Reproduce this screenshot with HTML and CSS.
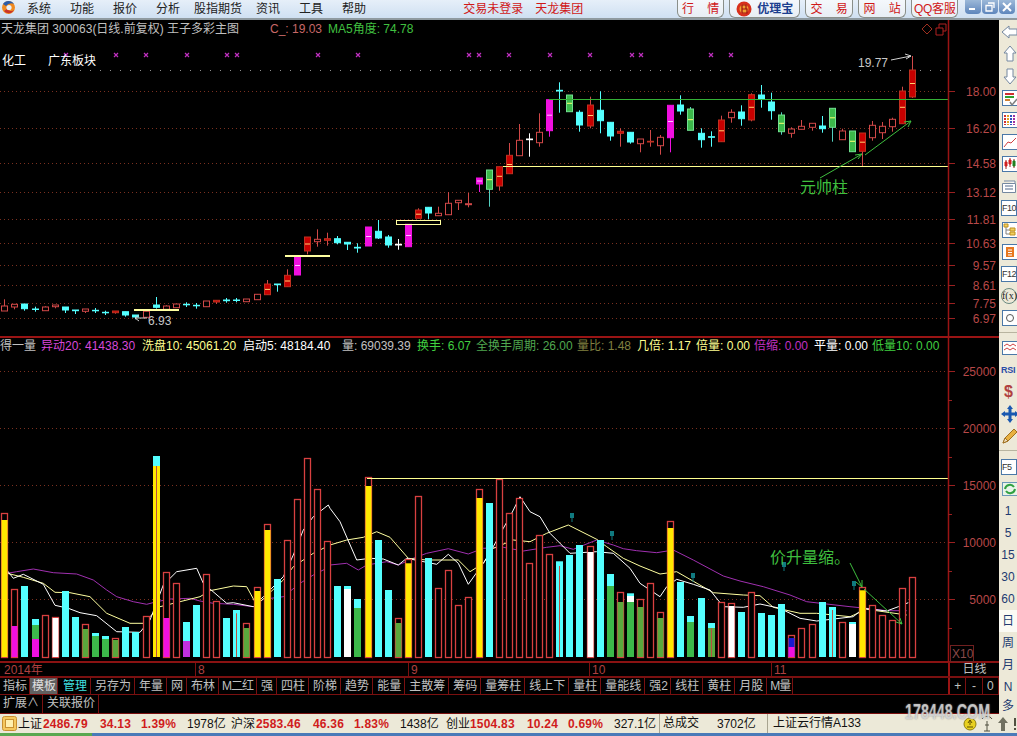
FILE: index.html
```html
<!DOCTYPE html>
<html lang="zh-CN">
<head>
    <meta charset="UTF-8">
    <title>天龙集团 300063</title>
    <link rel="stylesheet" href="styles.css">
</head>
<body>
    <!-- menu bar -->
    <header class="topbar">
        <svg class="logo" width="15" height="15" viewBox="0 0 15 15">
            <circle cx="7.5" cy="7.5" r="6.5" fill="#f08a20"/>
            <path d="M2 4 A6.5 6.5 0 0 1 13 4 A7 7 0 0 0 5 6 Z" fill="#2a5caa"/>
            <path d="M3 11 A6 6 0 0 0 13 10 A5 5 0 0 1 6 9 Z" fill="#c8342a"/>
            <circle cx="8" cy="7.5" r="2.6" fill="#e8f0f8"/>
        </svg>
        <nav class="menu">
            <span>系统</span><span>功能</span><span>报价</span><span>分析</span>
            <span class="menu-wide">股指期货</span><span>资讯</span><span>工具</span><span>帮助</span>
        </nav>
        <div class="trade-links">
            <span>交易未登录</span><span>天龙集团</span>
        </div>
        <div class="quick-btns">
            <span class="qbtn w46 spaced">行 情</span>
            <span class="qbtn w71 brand">
                <svg width="16" height="16" viewBox="0 0 16 16">
                    <circle cx="8" cy="8" r="7.5" fill="#d8301c"/>
                    <circle cx="8" cy="8" r="4.5" fill="#f0a030"/>
                    <path d="M6 4 V12 M6 4 H10 V8 H6 M6 8 H11 V12 H6" fill="none" stroke="#a01010" stroke-width="1.2"/>
                </svg>
                <b>优理宝</b>
            </span>
            <span class="qbtn w48 spaced">交 易</span>
            <span class="qbtn w48 spaced">网 站</span>
            <span class="qbtn w47">QQ客服</span>
        </div>
        <div class="win-btns">
            <span class="win-btn">
                <svg width="16" height="14" viewBox="0 0 16 14"><path d="M4 9 H10" stroke="#fff" stroke-width="2"/></svg>
            </span>
            <span class="win-btn">
                <svg width="16" height="14" viewBox="0 0 16 14"><path d="M6 3 H12 V8 M4 5.5 H10 V11 H4 Z" fill="none" stroke="#fff" stroke-width="1.3"/></svg>
            </span>
            <span class="win-btn">
                <svg width="16" height="14" viewBox="0 0 16 14"><path d="M4 3 L12 11 M12 3 L4 11" stroke="#fff" stroke-width="2"/></svg>
            </span>
        </div>
    </header>

    <div class="workspace">
        <main class="terminal">
            <!-- price chart -->
            <section class="panel panel-price">
                <svg class="chart" width="999" height="316" viewBox="0 20 999 316">
                    <g id="priceGrid"></g>
                    <g id="priceMarks"></g>
                    <g id="candles"></g>
                    <path d="M549 99.5 H948" stroke="#35b035"/>
                    <path d="M503 166.5 H948" stroke="#ffff90"/>
                    <path d="M134 310 H179 M285 256 H330" stroke="#ffffa0" stroke-width="2"/>
                    <rect x="396.5" y="220.5" width="44" height="4" fill="none" stroke="#ffffa0"/>
                    <path d="M820 178 L862 154 M855 155 L862 154 L858 159 M865 155 L911 121 M904 122 L911 121 L908 127" fill="none" stroke="#3fbf3f"/>
                    <path d="M891 60 L911 56 M905 54 L911 56 L906 59" fill="none" stroke="#d0d0d0"/>
                    <path d="M135 318 H147 M139 315 L135 318 L139 321" fill="none" stroke="#d0d0d0"/>
                    <text class="note" x="858" y="67">19.77</text>
                    <text class="note" x="148" y="325">6.93</text>
                    <text class="call" x="800" y="193">元帅柱</text>
                    <path d="M927 24 L932 29 L927 34 L922 29 Z" fill="none" stroke="#a03020"/>
                    <path d="M936 28 H943 V35 H936 Z M939 28 V24 H946 V31 H943" fill="none" stroke="#b02020"/>
                    <path d="M948.5 20 V336" stroke="#9a1414" stroke-width="1.5"/>
                    <g id="priceAxis" class="axis"></g>
                </svg>
                <div class="quote-row">
                    <span class="stock">天龙集团 300063(日线.前复权) 王子多彩主图</span>
                    <span class="price-c">C_: 19.03</span>
                    <span class="angle">MA5角度: 74.78</span>
                </div>
                <div class="sector-row">
                    <span class="sector-a">化工</span>
                    <span>广东板块</span>
                </div>
            </section>

            <!-- volume chart -->
            <section class="panel panel-volume">
                <svg class="chart" width="999" height="325" viewBox="0 337 999 325">
                    <g id="volumeGrid"></g>
                    <g id="volumeLines"></g>
                    <g id="bars"></g>
                    <g id="volumeMarks"></g>
                    <path d="M367 478.5 H948" stroke="#ffff90"/>
                    <path d="M850 563 L862 587 M856 582 L862 587 L862 580 M864 589 L902 624 M896 622 L902 624 L900 618" fill="none" stroke="#3fbf3f"/>
                    <text class="call" x="770" y="563">价升量缩。</text>
                    <path d="M948.5 337 V662" stroke="#9a1414" stroke-width="1.5"/>
                    <g id="volumeAxis" class="axis"></g>
                    <rect x="950.5" y="645.5" width="23" height="16" fill="#000" stroke="#702020"/>
                    <text class="x10" x="952" y="658">X10</text>
                </svg>
                <div class="indicator-row">
                    <span class="c-silver">得一量</span>
                    <span class="c-magenta">异动20: 41438.30</span>
                    <span class="c-yellow">洗盘10: 45061.20</span>
                    <span class="c-white">启动5: 48184.40</span>
                    <span class="c-silver">量: 69039.39</span>
                    <span class="c-green">换手: 6.07</span>
                    <span class="c-dimgreen">全换手周期: 26.00</span>
                    <span class="c-olive">量比: 1.48</span>
                    <span class="c-yellow">几倍: 1.17</span>
                    <span class="c-yellow">倍量: 0.00</span>
                    <span class="c-purple">倍缩: 0.00</span>
                    <span class="c-white">平量: 0.00</span>
                    <span class="c-green">低量10: 0.00</span>
                </div>
            </section>

            <!-- date axis -->
            <div class="date-row">
                <div class="dates">
                    <span class="date d-year">2014年</span>
                    <span class="date d-8">8</span>
                    <span class="date d-9">9</span>
                    <span class="date d-10">10</span>
                    <span class="date">11</span>
                </div>
                <div class="period">日线</div>
            </div>

            <!-- indicator tabs -->
            <div class="tab-row">
                <div class="tabs">
                    <span class="tab tab-first">指标</span>
                    <span class="tab tab-active">模板</span>
                    <span class="tab tab-cyan">管理</span>
                    <span class="tab">另存为</span>
                    <span class="tab">年量</span>
                    <span class="tab">网</span>
                    <span class="tab">布林</span>
                    <span class="tab tab-m w38">M二红</span>
                    <span class="tab">强</span>
                    <span class="tab">四柱</span>
                    <span class="tab">阶梯</span>
                    <span class="tab">趋势</span>
                    <span class="tab">能量</span>
                    <span class="tab">主散筹</span>
                    <span class="tab">筹码</span>
                    <span class="tab">量筹柱</span>
                    <span class="tab">线上下</span>
                    <span class="tab">量柱</span>
                    <span class="tab">量能线</span>
                    <span class="tab w26">强2</span>
                    <span class="tab">线柱</span>
                    <span class="tab">黄柱</span>
                    <span class="tab">月股</span>
                    <span class="tab tab-m w26">M量</span>
                </div>
                <div class="zoom-btns">
                    <span>+</span><span>-</span><span>0</span>
                </div>
            </div>
            <div class="tab-row tab-row-second">
                <div class="tabs">
                    <span class="tab w43">扩展∧</span>
                    <span class="tab">关联报价</span>
                </div>
            </div>
        </main>

        <!-- right toolbar -->
        <aside class="toolbar">
            <div class="tool"><svg width="18" height="18" viewBox="0 0 18 18"><path d="M1 9 L8 3 V6 H16 V12 H8 V15 Z" fill="#fff" stroke="#7488a0"/></svg></div>
            <div class="tool"><svg width="18" height="18" viewBox="0 0 18 18"><path d="M9 1 L15 8 H12 V16 H6 V8 H3 Z" fill="#fff" stroke="#7488a0"/></svg></div>
            <div class="tool"><svg width="18" height="18" viewBox="0 0 18 18"><path d="M9 17 L15 10 H12 V2 H6 V10 H3 Z" fill="#fff" stroke="#7488a0"/></svg></div>
            <div class="tool"><svg width="18" height="18" viewBox="0 0 18 18"><rect x="1.5" y="1.5" width="15" height="15" fill="#fff" stroke="#4a78a8"/><path d="M4 5 H13" stroke="#d03030" stroke-width="2"/><path d="M4 8 H13" stroke="#30a030" stroke-width="2"/><path d="M4 11 H9" stroke="#d08030" stroke-width="2"/><path d="M9 13 L11 16 L16 10" fill="none" stroke="#808080" stroke-width="1.5"/></svg></div>
            <div class="tool"><svg width="18" height="18" viewBox="0 0 18 18"><rect x="1.5" y="1.5" width="15" height="15" fill="#fff" stroke="#4a78a8"/><path d="M4 4 V14" stroke="#d03030" stroke-width="2" stroke-dasharray="2 1"/><path d="M7 4 V14" stroke="#e0a020" stroke-width="2" stroke-dasharray="2 1"/><path d="M10 4 V14" stroke="#3050c0" stroke-width="2" stroke-dasharray="2 1"/><path d="M13 4 V14" stroke="#a030a0" stroke-width="2" stroke-dasharray="2 1"/></svg></div>
            <div class="tool"><svg width="18" height="18" viewBox="0 0 18 18"><rect x="1.5" y="1.5" width="15" height="15" fill="#fff" stroke="#4a78a8"/><path d="M3 14 L7 9 L10 10 L15 5" fill="none" stroke="#d04040"/></svg></div>
            <div class="tool"><svg width="18" height="18" viewBox="0 0 18 18"><rect x="1.5" y="1.5" width="15" height="15" fill="#fff" stroke="#4a78a8"/><path d="M5 5 V14 M9 3 V12 M13 4 V13" stroke="#a02020"/><path d="M4 7 H6 V11 H4 Z M8 5 H10 V9 H8 Z" fill="#d02020" stroke="#d02020"/><path d="M12 6 H14 V11 H12 Z" fill="#208020" stroke="#208020"/></svg></div>
            <div class="tool"><svg width="18" height="18" viewBox="0 0 18 18"><path d="M3 4 H14 V6 M1.5 6.5 H14.5 V15.5 H1.5 Z" fill="#fff" stroke="#7488a0"/><path d="M4 9 H12 M4 12 H12" stroke="#50688a"/></svg></div>
            <div class="tool"><span class="fkey">F10</span></div>
            <div class="tool"><svg width="18" height="18" viewBox="0 0 18 18"><rect x="1.5" y="1.5" width="15" height="15" fill="#fff" stroke="#4a78a8"/><path d="M5 5 V13 H9 M5 9 H9" fill="none" stroke="#808080"/><path d="M3 3 H7 V6 H3 Z M9 7 H14 V10 H9 Z M9 11 H14 V14 H9 Z" fill="#f0d060" stroke="#c09020"/></svg></div>
            <div class="tool"><svg width="18" height="18" viewBox="0 0 18 18"><rect x="1.5" y="1.5" width="15" height="15" fill="#fff" stroke="#4a78a8"/><path d="M5 4 H13 V14 H5 Z" fill="#e87820"/><path d="M7 7 H11 M7 9.5 H11 M7 12 H11" stroke="#fff"/></svg></div>
            <div class="tool"><span class="fkey">F12</span></div>
            <div class="tool"><span class="fx">f(x)</span></div>
            <div class="tool"><svg width="18" height="18" viewBox="0 0 18 18"><rect x="1.5" y="1.5" width="15" height="15" fill="#fff" stroke="#4a78a8"/><circle cx="9" cy="9" r="3.5" fill="none" stroke="#555"/></svg></div>
            <div class="tool-sep tool-sep-a"></div>
            <div class="tool"><svg width="18" height="18" viewBox="0 0 18 18"><rect x="1.5" y="2.5" width="15" height="13" fill="#fff" stroke="#4a78a8"/><path d="M3 7 L6 5 L9 7 L12 5 L15 7 M3 11 L6 9 L9 11 L12 9 L15 11" fill="none" stroke="#d04040"/></svg></div>
            <div class="tool"><b class="rsi">RSI</b></div>
            <div class="tool"><b class="dollar">$</b></div>
            <div class="tool"><svg width="18" height="18" viewBox="0 0 18 18"><path d="M9 0 L12 4 H10.5 V7.5 H14 V6 L18 9 L14 12 V10.5 H10.5 V14 H12 L9 18 L6 14 H7.5 V10.5 H4 V12 L0 9 L4 6 V7.5 H7.5 V4 H6 Z" fill="#1a58b0"/></svg></div>
            <div class="tool"><svg width="18" height="18" viewBox="0 0 18 18"><path d="M2 16 L4 11 L13 2 L16 5 L7 14 Z" fill="#e8b040" stroke="#a07020"/><path d="M2 16 L4 11 L7 14 Z" fill="#f0e0c0" stroke="#a07020"/></svg></div>
            <div class="tool-sep tool-sep-b"></div>
            <div class="tool"><span class="fkey">F5</span></div>
            <div class="tool"><svg width="18" height="18" viewBox="0 0 18 18"><rect x="1.5" y="2.5" width="15" height="13" fill="#e8f4e8" stroke="#6a98b8"/><path d="M4 9 A5 5 0 0 1 13 7 M14 9 A5 5 0 0 1 5 11" fill="none" stroke="#30a040" stroke-width="2"/></svg></div>
            <div class="tool tool-text">1</div>
            <div class="tool tool-text">5</div>
            <div class="tool tool-text">15</div>
            <div class="tool tool-text">30</div>
            <div class="tool tool-text">60</div>
            <div class="tool tool-text tool-on">日</div>
            <div class="tool tool-text">周</div>
            <div class="tool tool-text">月</div>
            <div class="tool tool-text">N</div>
            <div class="tool tool-text tool-last">多</div>
        </aside>
    </div>

    <!-- status bar -->
    <footer class="statusbar">
        <svg class="status-icon" width="15" height="15" viewBox="0 0 15 15">
            <rect x="0.5" y="0.5" width="14" height="14" rx="2" fill="#f4c860" stroke="#c89030"/>
            <rect x="3.5" y="3.5" width="8" height="8" fill="#fff0b0" stroke="#c89030"/>
        </svg>
        <span class="s-name s-first">上证</span><b class="s-val w46px">2486.79</b><b class="s-val w41px">34.13</b><b class="s-val w47px">1.39%</b><span class="s-amt w44px">1978亿</span>
        <span class="s-name">沪深</span><b class="s-val w46px">2583.46</b><b class="s-val w41px">46.36</b><b class="s-val w47px">1.83%</b><span class="s-amt w46px">1438亿</span>
        <span class="s-name">创业</span><b class="s-val w58px">1504.83</b><b class="s-val w41px">10.24</b><b class="s-val w47px">0.69%</b><span class="s-amt w45px">327.1亿</span>
        <span class="s-cell s-total">总成交</span><span class="s-amt s-amount">3702亿</span>
        <span class="s-cell s-cloud">上证云行情A133</span>
        <div class="tray">
            <svg width="14" height="14" viewBox="0 0 14 14"><circle cx="7" cy="7" r="6" fill="#e8d020" stroke="#908010"/><path d="M7 3 V8 M5 6 L7 3 L9 6 M4 10 H10" fill="none" stroke="#605000"/></svg>
            <svg width="12" height="16" viewBox="0 0 12 16"><path d="M6 5 V15 M3 15 H9 M4 9 H8 M1 3 A6 6 0 0 1 11 3" fill="none" stroke="#505040"/></svg>
            <svg width="12" height="16" viewBox="0 0 12 16"><path d="M6 1 L11 7 H8 V15 H4 V7 H1 Z" fill="#707060"/></svg>
            <svg width="4" height="16" viewBox="0 0 4 16"><path d="M2 2 V10 M2 12 V14" stroke="#505040" stroke-width="2"/></svg>
        </div>
    </footer>
    <div class="taskbar"><div class="start"></div></div>

    <!-- site watermark -->
    <div class="watermark">178448.COM</div>

    <script src="chart.js"></script>
</body>
</html>
```

FILE: styles.css
```css
* {
    box-sizing: border-box;
}

html, body {
    margin: 0;
    height: 100%;
}

body {
    position: relative;
    width: 1017px;
    height: 736px;
    overflow: hidden;
    font-family: "Liberation Sans", "Noto Sans CJK SC", sans-serif;
    font-size: 12px;
    line-height: 16px;
    background-color: #000;
    color: #c0c0c0;
}

/* menu bar */
.topbar {
    display: flex;
    align-items: flex-start;
    height: 20px;
    border-bottom: 2px solid #8f9aa0;
    background: linear-gradient(#e6eff9, #cfe0f2);
    color: #222;
    white-space: nowrap;
}

.topbar > * {
    flex: none;
}

.logo {
    margin: 0 0 0 1px;
}

.menu {
    display: flex;
    gap: 19px;
    margin-left: 11px;
    padding-top: 1px;
}

.menu span {
    flex: none;
}

.menu-wide {
    margin: 0 -5px;
}

.trade-links {
    display: flex;
    gap: 12px;
    margin-left: 97px;
    padding-top: 1px;
    color: #d01818;
}

.quick-btns {
    display: flex;
    gap: 5px;
    margin-left: 94px;
}

.qbtn {
    display: flex;
    flex: none;
    align-items: center;
    justify-content: center;
    height: 18px;
    border: 1px solid #8a8f8a;
    border-top: none;
    border-radius: 0 0 6px 6px;
    background: linear-gradient(#f4f8fc, #e8eef4);
    color: #d01818;
}

.spaced {
    word-spacing: 10px;
}

.brand {
    gap: 5px;
    color: #1c3f8f;
}

.brand b {
    font-size: 12px;
}

.w46 { width: 47px; }
.w47 { width: 47px; letter-spacing: -0.3px; }
.w48 { width: 48px; }
.w71 { width: 71px; }

.win-btns {
    display: flex;
    gap: 1px;
    margin-left: 7px;
}

.win-btn {
    display: block;
    width: 16px;
    height: 14px;
    border-radius: 0 0 4px 4px;
    background: linear-gradient(#9cb8d8, #5e86bc);
}

.win-btn svg {
    display: block;
}

/* main area */
.workspace {
    display: flex;
    height: 694px;
}

.terminal {
    width: 999px;
    flex: none;
    background-color: #000;
}

.panel {
    position: relative;
}

.panel-price {
    height: 316px;
    border-bottom: 0;
}

.panel-volume {
    height: 327px;
    border-top: 2px solid #9a1414;
    border-bottom: 2px solid #8a1212;
}

.chart {
    position: absolute;
    left: 0;
    top: 0;
    display: block;
}

.panel-volume .chart {
    top: -1px;
}

.axis text {
    fill: #b84848;
    font-size: 12px;
    text-anchor: end;
}

.note {
    fill: #c8c8c8;
    font-size: 12px;
}

.call {
    fill: #3fbf3f;
    font-size: 16px;
}

.x10 {
    fill: #8a4a4a;
    font-size: 12px;
}

.quote-row {
    position: relative;
    display: flex;
    height: 18px;
    padding: 1px 0 0 1px;
}

.stock {
    width: 269px;
    flex: none;
}

.price-c {
    width: 58px;
    flex: none;
    color: #c86868;
}

.angle {
    color: #40c040;
}

.sector-row {
    position: relative;
    display: flex;
    margin-top: 15px;
    padding-left: 2px;
    color: #fff;
}

.sector-a {
    width: 46px;
}

.indicator-row {
    position: relative;
    display: grid;
    grid-template-columns: 41px 101px 101px 99px 75px 59px 101px 60px 59px 58px 60px 58px 76px;
    height: 16px;
    white-space: nowrap;
}

.c-silver { color: #c0c0c0; }
.c-magenta { color: #d848d8; }
.c-yellow { color: #ffff90; }
.c-white { color: #fff; }
.c-green { color: #40d040; }
.c-dimgreen { color: #50a850; }
.c-olive { color: #808040; }
.c-purple { color: #c030c0; }

/* date axis */
.date-row {
    display: flex;
    height: 15px;
    border-bottom: 2px solid #7a1010;
}

.dates {
    display: flex;
    width: 948px;
    color: #b04040;
    line-height: 15px;
}

.date {
    height: 13px;
    padding-left: 2px;
    border-left: 1px solid #7a1010;
}

.d-year {
    width: 195px;
    padding-left: 4px;
    border-left: none;
}

.d-8 { width: 213px; }
.d-9 { width: 181px; }
.d-10 { width: 182px; }

.period {
    flex: 1;
    border-left: 2px solid #9a1414;
    text-align: center;
    line-height: 13px;
}

/* tabs */
.tab-row {
    display: flex;
    height: 17px;
    border-bottom: 1px solid #7a1010;
    line-height: 16px;
}

.tab-row-second {
    height: 19px;
}

.tabs {
    display: flex;
    width: 948px;
}

.tab {
    flex: none;
    padding: 0 3px 0 4px;
    border-right: 1px solid #7a1010;
    white-space: nowrap;
}

.tab-first {
    width: 30px;
    padding: 0 0 0 3px;
}

.tab-active {
    width: 28px;
    padding: 0 0 0 2px;
    background-color: #606060;
    color: #e0e0e0;
}

.tab-cyan {
    width: 33px;
    padding: 0 0 0 5px;
    color: #40e0e0;
}

.tab-m {
    padding: 0 0 0 3px;
    letter-spacing: -1px;
}

.w26 { width: 26px; }
.w38 { width: 38px; }
.w43 { width: 43px; padding: 0 0 0 3px; }

.zoom-btns {
    display: flex;
    flex: 1;
    border-left: 2px solid #9a1414;
}

.zoom-btns span {
    flex: 1;
    text-align: center;
    border-right: 1px solid #7a1010;
}

/* right toolbar */
.toolbar {
    flex: 1;
    overflow: hidden;
    padding: 1px 0 0 2px;
    background-color: #ede9d8;
    color: #223a70;
}

.tool {
    display: flex;
    align-items: center;
    height: 22px;
    white-space: nowrap;
}

.tool svg {
    flex: none;
}

.tool-sep {
    border-top: 1px solid #b8b4a0;
}

.tool-sep-a { height: 8px; margin: 3px 0 -3px -2px; }
.tool-sep-b { height: 9px; margin: 3px 0 -3px -2px; }

.fkey {
    display: block;
    width: 16px;
    height: 16px;
    border: 1px solid #4a78a8;
    background-color: #fff;
    color: #333;
    font-size: 9px;
    line-height: 14px;
    letter-spacing: -0.5px;
}

.fx {
    display: block;
    width: 16px;
    height: 16px;
    border: 1px solid #6a8a80;
    border-radius: 8px;
    color: #222;
    font-family: "Liberation Serif", serif;
    font-size: 10px;
    line-height: 14px;
    text-align: center;
}

.rsi {
    color: #2a4ca8;
    font-size: 9px;
    letter-spacing: -0.3px;
}

.dollar {
    color: #b04040;
    font-size: 16px;
    padding-left: 3px;
}

.tool-text {
    margin-left: -2px;
    justify-content: center;
    color: #223a70;
}

.tool-on {
    background-color: #fbfaf4;
}

.tool-last {
    height: 16px;
}

/* status bar */
.statusbar {
    display: flex;
    align-items: center;
    height: 19px;
    background-color: #ece9d8;
    color: #111;
    white-space: nowrap;
}

.status-icon {
    flex: none;
    margin-left: 2px;
}

.s-name {
    width: 24px;
    flex: none;
}

.s-first {
    margin-left: 1px;
}

.s-val {
    flex: none;
    color: #d01c1c;
    font-size: 12px;
    letter-spacing: 0.2px;
}

.s-amt {
    flex: none;
    margin-left: 1px;
}

.w41px { width: 41px; margin-left: 11px; }
.w46px { width: 46px; margin-left: 1px; }
.w58px { width: 46px; margin-left: 0; }
.w47px { width: 35px; margin-left: 0; }
.w44px { width: 44px; margin-left: 11px; }
.w45px { width: 45px; margin-left: 11px; }

.s-amt.w46px { width: 46px; margin-left: 11px; }

.s-cell {
    flex: none;
    padding-left: 3px;
    border-left: 1px solid #a8a490;
    line-height: 19px;
}

.s-total {
    width: 57px;
}

.s-amount {
    width: 50px;
}

.s-cloud {
    padding-left: 5px;
}

.tray {
    display: flex;
    align-items: center;
    gap: 4px;
    margin-left: auto;
    padding-left: 4px;
    color: #555;
}

.taskbar {
    height: 3px;
    background-color: #4a7ab8;
}

.start {
    width: 92px;
    height: 3px;
    background-color: #5aa850;
}

.watermark {
    position: absolute;
    left: 905px;
    top: 701px;
    color: rgba(232, 232, 232, 0.72);
    font-size: 22px;
    font-weight: bold;
    line-height: 22px;
    text-shadow: 0 0 2px #888;
    white-space: nowrap;
    transform: scaleX(0.65);
    transform-origin: left top;
}
```

FILE: chart.js
```js
// column spacing of the kline chart
function columnX(i) {
    return 4.3 + 10.09 * i;
}

// numbers below are read off a 3x picture, so divide by 3 and add the offset
function y3(base, v) {
    return (base + v / 3).toFixed(1);
}

function line(x1, y1, x2, y2, color) {
    return '<path d="M' + x1 + ' ' + y1 + ' L' + x2 + ' ' + y2 + '" stroke="' + color + '"/>';
}

/* ---------- grid and axis ---------- */

var priceTicks = [[91, "18.00"], [128, "16.20"], [163, "14.58"], [192, "13.12"], [219, "11.81"],
    [243, "10.63"], [265, "9.57"], [285, "8.61"], [303, "7.75"], [318, "6.97"]];
var volumeTicks = [[371, "25000"], [428, "20000"], [485, "15000"], [542, "10000"], [599, "5000"]];

function drawAxis(ticks, gridId, axisId, mids) {
    var grid = "";
    var axis = "";
    ticks.forEach(function (t) {
        grid += '<path d="M0 ' + (t[0] + 0.5) + ' H948" stroke="#7a3020" stroke-dasharray="1 3"/>';
        axis += line(948, t[0] + 0.5, 955, t[0] + 0.5, "#9a2020");
        axis += '<text x="996" y="' + (t[0] + 5) + '">' + t[1] + "</text>";
    });
    mids.forEach(function (y) {
        axis += line(948, y + 0.5, 952, y + 0.5, "#9a2020");
    });
    document.getElementById(gridId).innerHTML = grid;
    document.getElementById(axisId).innerHTML = axis;
}

drawAxis(priceTicks, "priceGrid", "priceAxis", []);
drawAxis(volumeTicks, "volumeGrid", "volumeAxis", [400, 457, 514, 571, 628]);
document.getElementById("priceGrid").innerHTML +=
    '<path d="M0 70.5 H948" stroke="#909090" stroke-dasharray="1 9"/>';

/* ---------- purple crosses above the candles ---------- */

var crosses = [66, 116, 146, 187, 227, 237, 318, 358, 469, 479, 509, 550, 590, 632, 641, 711, 731];
var marks = "";
crosses.forEach(function (x) {
    marks += '<path d="M' + (x - 2) + ' 53 L' + (x + 2) + " 57 M" + (x + 2) + " 53 L" + (x - 2) +
        ' 57" stroke="#c030c0" stroke-width="1.2"/>';
});
document.getElementById("priceMarks").innerHTML = marks;

/* ---------- candles: high, body top, body bottom, low, kind ---------- */

var candlesEarly = [
    [328, 348, 363, 363, "h"], [343, 343, 351, 358, "h"], [342, 342, 356, 362, "c"], [350, 357, 358, 365, "c"],
    [349, 351, 362, 362, "h"], [345, 345, 350, 355, "h"], [351, 351, 360, 369, "c"], [360, 360, 362, 372, "c"],
    [357, 357, 364, 369, "h"], [354, 361, 362, 369, "c"], [362, 367, 368, 375, "c"], [363, 363, 368, 371, "r"],
    [365, 365, 375, 380, "c"], [375, 375, 381, 388, "c"], [364, 364, 382, 382, "h"], [321, 345, 352, 356, "c"],
    [346, 348, 358, 358, "h"], [342, 342, 353, 353, "h"], [337, 343, 344, 351, "c"], [339, 346, 347, 356, "c"],
    [333, 333, 350, 350, "h"], [331, 331, 336, 342, "r"], [324, 330, 332, 338, "c"], [324, 330, 331, 337, "c"],
    [327, 327, 335, 335, "h"], [313, 313, 329, 329, "h"], [270, 282, 314, 314, "r"], [282, 282, 284, 305, "c"],
    [238, 256, 290, 290, "r"], [198, 198, 255, 255, "m"], [141, 141, 183, 193, "r"], [118, 148, 155, 170, "h"],
    [128, 146, 151, 167, "r"], [138, 146, 158, 163, "c"], [157, 157, 162, 180, "c"], [160, 172, 174, 188, "c"],
    [111, 111, 168, 168, "m"], [90, 124, 144, 147, "c"], [135, 141, 165, 173, "c"], [147, 163, 165, 179, "w"],
    [103, 103, 170, 170, "m"], [55, 60, 85, 85, "r"], [52, 52, 69, 87, "c"], [50, 70, 77, 77, "h"],
    [6, 40, 74, 74, "h"], [31, 31, 38, 60, "h"], [9, 41, 44, 52, "h"]
];
var candlesLate = [
    [384, 384, 402, 426, "m"], [360, 360, 418, 470, "g"], [350, 350, 408, 422, "r"], [279, 316, 371, 371, "r"],
    [222, 271, 317, 317, "h"], [250, 267, 269, 320, "w"], [190, 247, 278, 290, "h"], [149, 149, 242, 260, "m"],
    [97, 121, 123, 188, "c"], [135, 135, 185, 185, "g"], [181, 187, 225, 245, "c"], [140, 165, 228, 235, "r"],
    [124, 181, 212, 250, "c"], [217, 217, 258, 272, "c"], [235, 244, 250, 290, "r"], [247, 247, 276, 281, "c"],
    [267, 267, 281, 307, "h"], [240, 274, 276, 290, "r"], [255, 262, 287, 314, "h"], [166, 166, 263, 307, "m"],
    [136, 165, 183, 194, "c"], [171, 177, 241, 241, "g"], [235, 250, 269, 293, "c"], [244, 260, 262, 290, "c"],
    [197, 210, 275, 275, "r"], [178, 187, 203, 218, "h"], [166, 186, 206, 227, "c"], [130, 134, 210, 214, "r"],
    [105, 135, 148, 173, "c"], [128, 156, 182, 209, "c"], [187, 195, 245, 254, "g"], [232, 237, 250, 263, "h"],
    [210, 229, 238, 238, "h"], [220, 220, 232, 242, "h"], [198, 228, 236, 248, "c"], [175, 175, 232, 275, "g"],
    [236, 243, 269, 269, "h"], [243, 243, 305, 305, "g"], [249, 249, 304, 348, "r"], [213, 226, 263, 272, "h"],
    [216, 229, 248, 267, "h"], [203, 208, 230, 245, "h"], [110, 123, 221, 221, "r"], [18, 60, 141, 144, "r"]
];

var candleColors = {
    h: { wick: "#d04848", fill: "#000", stroke: "#d04848" },
    r: { wick: "#d04848", fill: "#c80000", stroke: "#c03020", tick: "#ffd070" },
    c: { wick: "#54ffff", fill: "#54ffff", stroke: "#54ffff" },
    g: { wick: "#54d0c0", fill: "#3cb84a", stroke: "#70e090", tick: "#ffff70" },
    m: { wick: "#f010e0", fill: "#f010e0", stroke: "#f010e0", tick: "#ffc0ff" },
    w: { wick: "#fff", fill: "#fff", stroke: "#fff" }
};

function candleSvg(c, i, base) {
    var k = candleColors[c[4]];
    var cx = Math.round(columnX(i)) + 0.5;
    var top = y3(base, c[1]);
    var bottom = y3(base, c[2]);
    var s = line(cx, y3(base, c[0]), cx, y3(base, c[3]), k.wick);
    s += '<rect x="' + (cx - 3) + '" y="' + top + '" width="6" height="' + Math.max(bottom - top, 0.5).toFixed(1) +
        '" fill="' + k.fill + '" stroke="' + k.stroke + '"/>';
    if (k.tick && c[2] - c[1] > 14) {
        var mid = ((+top + +bottom) / 2).toFixed(1);
        s += line(cx - 2.5, mid, cx + 2.5, mid, k.tick);
    }
    return s;
}

var candleHtml = "";
candlesEarly.forEach(function (c, i) {
    candleHtml += candleSvg(c, i, 190);
});
candlesLate.forEach(function (c, i) {
    candleHtml += candleSvg(c, i + candlesEarly.length, 50);
});
document.getElementById("candles").innerHTML = candleHtml;

/* ---------- volume curves, behind the bars ---------- */

function curve(color, parts) {
    var pts = [];
    parts.forEach(function (p) {
        p[1].forEach(function (q) {
            pts.push((p[0] + q[0] / 3).toFixed(1) + "," + y3(450, q[1]));
        });
    });
    return '<polyline points="' + pts.join(" ") + '" fill="none" stroke="' + color + '"/>';
}

document.getElementById("volumeLines").innerHTML =
    curve("#a030b0", [
        [0, [[22, 370], [50, 365], [100, 357], [160, 368], [230, 372], [280, 390], [320, 420], [350, 440], [400, 455],
            [440, 463], [470, 455], [510, 447], [570, 445], [600, 453], [640, 460], [700, 463], [760, 470], [790, 448],
            [850, 440], [900, 400], [940, 375], [980, 355]]],
        [330, [[0, 345], [50, 340], [85, 360], [110, 345], [170, 335], [205, 345], [250, 325], [290, 310], [355, 296],
            [415, 312], [460, 295], [520, 292], [580, 303], [650, 292], [690, 287], [730, 298], [800, 270], [850, 285],
            [880, 296], [920, 302]]],
        [640, [[0, 303], [50, 308], [100, 300], [160, 330], [250, 378], [300, 393], [370, 410], [450, 435], [500, 455],
            [560, 462], [630, 470], [680, 475], [740, 482], [800, 482]]]
    ]) +
    curve("#ffffa0", [
        [0, [[22, 370], [70, 382], [130, 400], [165, 427], [210, 428], [270, 440], [320, 490], [390, 520], [430, 520],
            [480, 470], [540, 455], [600, 440], [630, 422], [700, 408], [740, 410], [770, 465], [850, 390], [880, 350],
            [940, 310]]],
        [330, [[0, 285], [50, 270], [100, 262], [140, 245], [180, 262], [235, 325], [290, 330], [385, 330], [420, 365],
            [460, 340], [490, 295], [550, 270], [600, 275], [650, 250], [715, 225], [800, 268], [830, 290], [880, 325]]],
        [640, [[0, 348], [60, 372], [110, 365], [220, 428], [310, 435], [360, 437], [400, 472], [480, 490], [530, 490],
            [630, 500], [680, 478], [800, 495]]]
    ]) +
    curve("#ffffff", [
        [0, [[22, 362], [40, 385], [70, 373], [130, 403], [165, 466], [205, 475], [240, 488], [290, 497], [350, 545],
            [420, 547], [450, 510], [490, 405], [530, 365], [590, 355], [610, 400], [680, 460], [700, 458], [760, 470],
            [790, 440], [850, 380], [880, 315], [910, 240], [940, 200], [985, 165]]],
        [330, [[0, 175], [30, 215], [80, 330], [120, 325], [160, 327], [205, 345], [230, 325], [320, 343], [355, 313],
            [385, 340], [415, 403], [460, 340], [490, 290], [520, 235], [545, 190], [570, 140], [600, 185], [630, 200],
            [660, 250], [720, 310], [800, 305], [850, 310], [900, 355]]],
        [640, [[0, 400], [60, 440], [80, 410], [110, 388], [160, 403], [210, 420], [250, 470], [310, 472], [360, 462],
            [420, 475], [480, 505], [530, 513], [640, 500], [670, 475], [740, 483], [775, 470], [805, 458]]]
    ]);

/* ---------- volume bars: pairs of top, kind, drawn from the tallest down ---------- */

var bars = [
    [190, "h", 210, "y"], [418, "h", 528, "m"], [408, "c"], [507, "c", 525, "g", 567, "m"], [496, "h"], [500, "h", 504, "w"],
    [423, "c"], [501, "c"], [523, "h", 537, "o"], [549, "c", 558, "g"], [558, "c", 567, "g"], [565, "h", 570, "o"],
    [531, "c"], [546, "c"], [499, "h"], [18, "c", 48, "y", 48, "l"], [367, "h", 504, "m"], [400, "h"],
    [516, "c", 573, "p"], [465, "c"], [373, "h"], [454, "h"], [504, "c"], [480, "c", 490, "l"],
    [519, "h", 534, "o"], [412, "h", 423, "y"], [223, "h", 240, "y"], [387, "c"], [271, "h"], [148, "h"],
    [25, "h"], [118, "h"], [274, "h"], [408, "c"], [408, "c", 417, "w"], [447, "c", 474, "g"],
    [82, "h", 108, "y"], [270, "c"], [420, "c"], [505, "h", 519, "o"], [328, "h", 340, "y"], [139, "h"],
    [324, "c"], [415, "h"], [361, "h"], [465, "h"], [441, "h"], [118, "h", 144, "y"],
    [159, "c"], [87, "h"], [190, "h"], [145, "h"], [340, "h"], [256, "h"], [313, "h"], [334, "c", 348, "l"],
    [315, "c"], [285, "c"], [289, "h", 306, "w"], [270, "c"], [372, "c", 408, "g"], [427, "h", 456, "o"],
    [430, "c", 438, "w", 456, "g"], [448, "h", 471, "o"], [400, "h"], [487, "h", 504, "o"], [214, "h", 234, "y"],
    [396, "c"], [498, "c", 516, "g"], [444, "c"], [519, "c", 534, "o", 534, "l"], [457, "h"], [460, "h", 468, "w"],
    [486, "c"], [427, "h"], [489, "c"], [495, "c"], [462, "c"], [556, "h", 564, "b", 591, "m"], [535, "h"],
    [523, "h"], [456, "c"], [471, "c", 480, "l"], [517, "h"], [516, "c", 522, "w"], [411, "h", 421, "y"],
    [465, "h"], [495, "h"], [511, "h"], [415, "h"], [381, "h"]
];

var barColors = { y: "#ffe800", c: "#54ffff", m: "#f010e0", w: "#fff", g: "#3cb84a", o: "#5aa83c", p: "#c030e0", b: "#1818d0" };

var barHtml = "";
bars.forEach(function (b, i) {
    var left = Math.round(columnX(i)) - 3;
    for (var n = 0; n < b.length; n += 2) {
        var top = +y3(450, b[n]);
        var kind = b[n + 1];
        if (kind === "h") {
            barHtml += '<rect x="' + (left + 0.5) + '" y="' + (Math.round(top) + 0.5) + '" width="6" height="' +
                (657 - Math.round(top)) + '" fill="#000" stroke="#d84040" stroke-width="1.3"/>';
        } else if (kind === "l") {
            barHtml += line(left + 3.5, top, left + 3.5, 657, "#b85040");
        } else {
            // fill reaches over the inner half of a hollow bar's outline
            var hollow = b[1] === "h";
            barHtml += '<rect x="' + (hollow ? left + 0.5 : left) + '" y="' + top + '" width="' + (hollow ? 6 : 7) +
                '" height="' + (657 - top) + '" fill="' + barColors[kind] + '"/>';
        }
    }
});
document.getElementById("bars").innerHTML = barHtml;

/* ---------- small teal flags over the curves ---------- */

var flags = [[572, 513], [612, 531], [693, 573], [784, 562], [854, 581]];
var flagHtml = "";
flags.forEach(function (f) {
    flagHtml += '<rect x="' + (f[0] - 2) + '" y="' + f[1] + '" width="4" height="5" fill="#107a80"/>' +
        line(f[0], f[1] + 5, f[0], f[1] + 9, "#107a80");
});
document.getElementById("volumeMarks").innerHTML = flagHtml;
```
